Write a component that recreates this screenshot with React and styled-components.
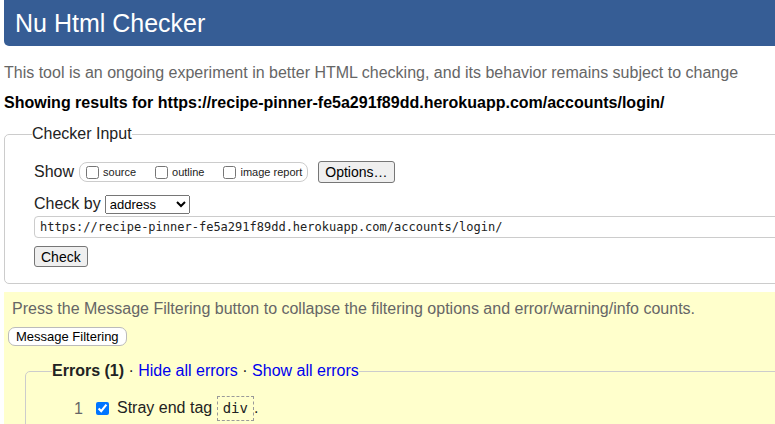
import React from 'react';
import styled, { createGlobalStyle } from 'styled-components';

const GlobalStyle = createGlobalStyle`
    html, body {
        margin: 0;
        padding: 0;
        background: #ffffff;
        overflow: hidden;
    }
    body {
        font-family: "Liberation Sans", Arial, sans-serif;
    }
`;

const Page = styled.div`
    width: 840px;
    padding-left: 4px;
    box-sizing: border-box;
`;

const Header = styled.h1`
    margin: 0;
    height: 46px;
    padding-left: 11px;
    background: #365d95;
    border-radius: 0 0 5px 5px;
    color: #ffffff;
    font-size: 25px;
    font-weight: normal;
    line-height: 46px;
`;

const Intro = styled.p`
    margin: 17px 0 0 0;
    font-size: 16px;
    line-height: 20px;
    color: #666666;
`;

const ResultFor = styled.p`
    margin: 10px 0 0 0;
    font-size: 16px;
    line-height: 20px;
    font-weight: bold;
    color: #000000;
`;

const Fieldset = styled.fieldset`
    margin: ${p => p.$top}px 0 0 ${p => p.$left || 0}px;
    padding: ${p => p.$padTop}px 0 ${p => p.$padBottom}px ${p => p.$padLeft}px;
    border: 1px solid #cccccc;
    border-radius: 5px;
    min-width: 0;
`;

const Legend = styled.legend`
    padding: 0;
    margin-left: ${p => p.$shift || 0}px;
    font-size: 16px;
    line-height: 20px;
    color: #222222;
`;

const Row = styled.div`
    display: flex;
    align-items: center;
    height: ${p => p.$h}px;
    margin-top: ${p => p.$top || 0}px;
`;

const RowLabel = styled.span`
    font-size: 16px;
    color: #222222;
    margin-right: ${p => p.$gap}px;
`;

const Pill = styled.div`
    display: flex;
    align-items: center;
    gap: 19px;
    height: 18px;
    padding: 0 5px 0 6px;
    border: 1px solid #cccccc;
    border-radius: 8px;
`;

const SmallOption = styled.label`
    display: flex;
    align-items: center;
    gap: 4px;
    font-size: 11px;
    color: #222222;
`;

const Box = styled.input`
    margin: 0;
    width: 13px;
    height: 13px;
`;

const GreyButton = styled.button`
    height: ${p => p.$h || 21}px;
    margin-left: ${p => p.$left || 0}px;
    padding: 0 6px;
    background: #efefef;
    border: 1px solid #767676;
    border-radius: 3px;
    font-family: "Liberation Sans", Arial, sans-serif;
    font-size: 14px;
    color: #000000;
`;

const Select = styled.select`
    width: 85px;
    height: 19px;
    font-family: "Liberation Sans", Arial, sans-serif;
    font-size: 13px;
    color: #000000;
`;

const UrlInput = styled.input`
    display: block;
    box-sizing: border-box;
    width: 100%;
    height: 22px;
    margin: 2px 0 0 0;
    padding: 0 5px;
    border: 1px solid #cccccc;
    border-radius: 4px;
    font-family: "DejaVu Sans Mono", "Liberation Mono", monospace;
    font-size: 12px;
    color: #222222;
`;

const Results = styled.div`
    margin-top: 8px;
    padding: 7px 0 40px 4px;
    background: #ffffcc;
`;

const Note = styled.p`
    margin: 0 0 0 4px;
    font-size: 16px;
    line-height: 20px;
    color: #666666;
`;

const FilterButton = styled.button`
    display: block;
    height: 19px;
    margin-top: 8px;
    padding: 0 7px;
    background: #ffffff;
    border: 1px solid #bbbbbb;
    border-radius: 7px;
    font-family: "Liberation Sans", Arial, sans-serif;
    font-size: 13px;
    color: #000000;
`;

const Strong = styled.strong`
    color: #222222;
`;

const Link = styled.a`
    color: #0000ee;
    text-decoration: none;
`;

const MessageList = styled.ol`
    margin: 0;
    padding: 0;
    list-style: none;
`;

const Message = styled.li`
    display: flex;
    align-items: center;
    height: 25px;
`;

const Num = styled.span`
    width: 31px;
    text-align: right;
    font-size: 16px;
    color: #666666;
    margin-right: 13px;
`;

const MessageText = styled.span`
    margin-left: 8px;
    font-size: 16px;
    color: #222222;
`;

const Code = styled.code`
    display: inline-block;
    padding: 0 5px;
    line-height: 23px;
    border: 1px dashed #999999;
    font-family: "DejaVu Sans Mono", "Liberation Mono", monospace;
    font-size: 14px;
    color: #222222;
`;

const App = () => {
    const url = 'https://recipe-pinner-fe5a291f89dd.herokuapp.com/accounts/login/';
    return (
        <Page>
            <GlobalStyle />
            <Header>Nu Html Checker</Header>
            <Intro>This tool is an ongoing experiment in better HTML checking, and its behavior remains subject to change</Intro>
            <ResultFor>Showing results for {url}</ResultFor>

            <Fieldset $top={11} $padTop={17} $padBottom={16} $padLeft={29}>
                <Legend $shift={-2}>Checker Input</Legend>
                <Row $h={22}>
                    <RowLabel $gap={5}>Show</RowLabel>
                    <Pill>
                        <SmallOption><Box type="checkbox" />source</SmallOption>
                        <SmallOption><Box type="checkbox" />outline</SmallOption>
                        <SmallOption><Box type="checkbox" />image report</SmallOption>
                    </Pill>
                    <GreyButton $left={10} $h={22}>Options…</GreyButton>
                </Row>
                <Row $h={20} $top={11}>
                    <RowLabel $gap={4}>Check by</RowLabel>
                    <Select defaultValue="address">
                        <option value="address">address</option>
                        <option value="file">file upload</option>
                        <option value="text">text input</option>
                    </Select>
                </Row>
                <UrlInput type="url" defaultValue={url} />
                <Row $h={21} $top={8}>
                    <GreyButton>Check</GreyButton>
                </Row>
            </Fieldset>

            <Results>
                <Note>Press the Message Filtering button to collapse the filtering options and error/warning/info counts.</Note>
                <FilterButton>Message Filtering</FilterButton>
                <Fieldset $top={15} $left={17} $padTop={15} $padBottom={10} $padLeft={26}>
                    <Legend>
                        <Strong>Errors (1)</Strong> · <Link href="#">Hide all errors</Link> · <Link href="#">Show all errors</Link>
                    </Legend>
                    <MessageList>
                        <Message>
                            <Num>1</Num>
                            <Box type="checkbox" defaultChecked />
                            <MessageText>Stray end tag <Code>div</Code>.</MessageText>
                        </Message>
                    </MessageList>
                </Fieldset>
            </Results>
        </Page>
    );
};

export default App;
